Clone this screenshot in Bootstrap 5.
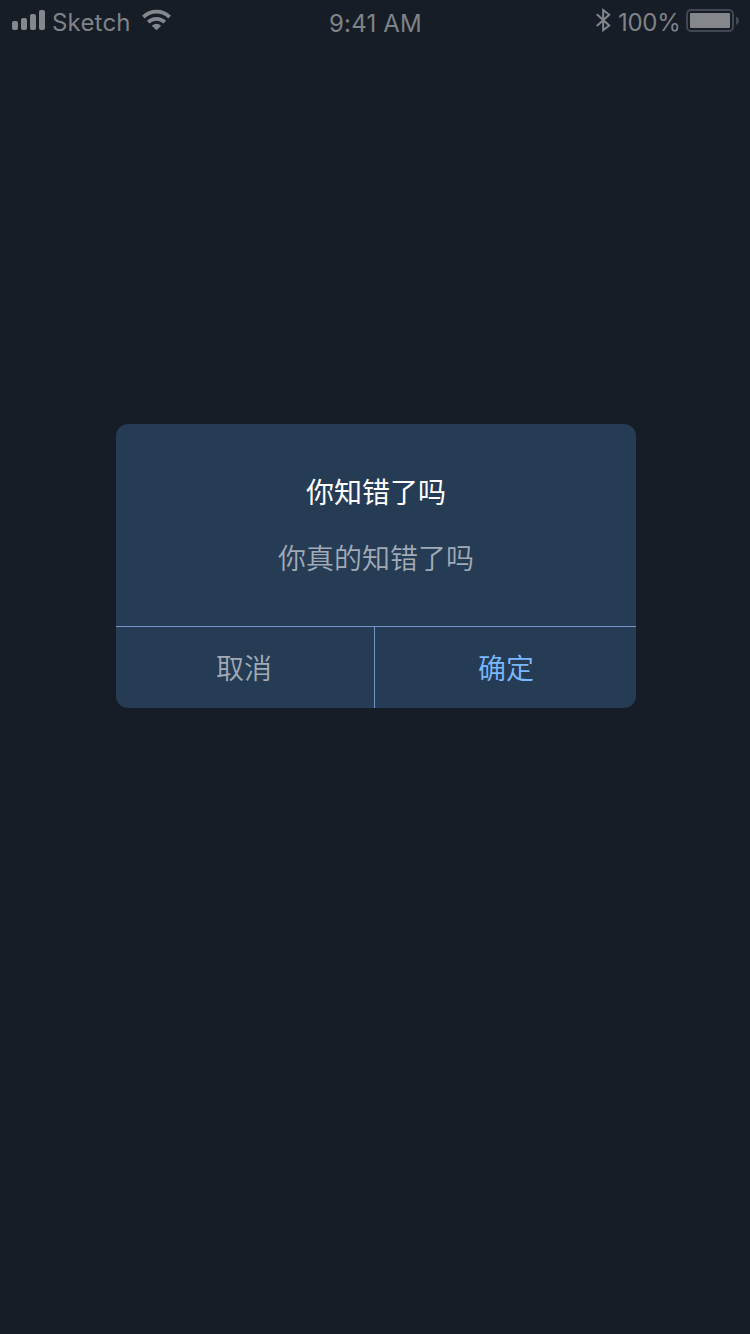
<!DOCTYPE html>
<html lang="zh-CN">
<head>
<meta charset="utf-8">
<meta name="viewport" content="width=device-width, initial-scale=1">
<title>确认</title>
<link href="https://cdn.jsdelivr.net/npm/bootstrap@5.3.0/dist/css/bootstrap.min.css" rel="stylesheet">
<style>
body { background: #161d27; font-family: "Inter", "Noto Sans CJK SC", sans-serif; }
.status-bar { height: 40px; color: #84888d; font-size: 24px; line-height: 40px; padding: 0 11px 0 12px; }
.status-bar svg { display: block; flex: none; }
.status-side { height: 40px; flex: 1 1 0; }
.status-label { height: 40px; line-height: 40px; padding-top: 3px; white-space: nowrap; font-weight: 400; color: #7f8388; }
.carrier { width: 78px; margin: 0 12px 0 7px; letter-spacing: .2px; }
.clock { padding-top: 4px; letter-spacing: .2px; }
.percent { width: 63px; margin: 0 5px 0 7px; letter-spacing: -.3px; }
.confirm-box { width: 520px; margin: 384px 0 0 116px; border: 0; border-radius: 12px; background: #263c54; overflow: hidden; font-family: "Noto Sans CJK SC", sans-serif; font-size: 28px; }
.confirm-text { height: 202px; padding-top: 46px; line-height: 42px; }
.confirm-text h1 { font-size: 28px; line-height: 42px; font-weight: 400; margin-bottom: 24px; color: #fff; }
.confirm-text p { color: #a1abb7; margin: 0; font-weight: 350; }
.confirm-actions { height: 82px; border-top: 1px solid #7195c4; }
.confirm-actions .btn { border: 0; border-radius: 0; font-size: 28px; line-height: 42px; font-weight: 350; padding: 0 0 2px; }
.btn-cancel { width: 259px; color: #a1abb7; border-right: 1px solid #7195c4 !important; padding-right: 2px !important; }
.confirm-actions .btn-cancel { color: #a1abb7; }
.confirm-actions .btn-ok { color: #7ab8ff; padding-left: 1px; }
</style>
</head>
<body>
<header class="status-bar d-flex">
  <div class="status-side d-flex">
    <svg width="33" height="40" fill="currentColor"><rect y="21" width="6" height="9" rx="2"/><rect x="9" y="18" width="6" height="12" rx="2"/><rect x="18" y="14" width="6" height="16" rx="2"/><rect x="27" y="10" width="6" height="20" rx="2"/></svg>
    <span class="status-label carrier">Sketch</span>
    <svg width="29" height="40" viewBox="0 0 29 40"><g fill="none" stroke="currentColor" stroke-width="3.800"><path d="M1.400 17.100a18.600 18.600 0 0 1 26.200 0"/><path d="M6.200 22.200a12 12 0 0 1 16.600 0"/></g><path fill="currentColor" d="M14.500 30.200L9.800 25.700Q14.500 22 19.200 25.700Z"/></svg>
  </div>
  <span class="status-label clock">9:41 AM</span>
  <div class="status-side d-flex justify-content-end">
    <svg width="15" height="40" fill="none" stroke="currentColor" stroke-width="2"><path d="M.8 14.300L13.200 25.500L7.200 30.200V10L13.200 14.700L.8 25.900"/></svg>
    <span class="status-label percent">100%</span>
    <svg width="53" height="40"><rect x="1" y="10" width="46" height="21" rx="4" fill="none" stroke="#424852" stroke-width="2"/><rect x="4" y="13" width="40" height="15" rx="1" fill="currentColor"/><path fill="#424852" d="M50 16.500c4 1.500 4 7 0 8.500z"/></svg>
  </div>
</header>
<main>
  <section class="card confirm-box" role="dialog" aria-labelledby="confirm-title">
    <div class="confirm-text text-center">
      <h1 id="confirm-title">你知错了吗</h1>
      <p>你真的知错了吗</p>
    </div>
    <div class="confirm-actions d-flex">
      <button type="button" class="btn btn-cancel">取消</button>
      <button type="button" class="btn btn-ok flex-fill">确定</button>
    </div>
  </section>
</main>
<script src="https://cdn.jsdelivr.net/npm/bootstrap@5.3.0/dist/js/bootstrap.bundle.min.js"></script>
</body>
</html>
